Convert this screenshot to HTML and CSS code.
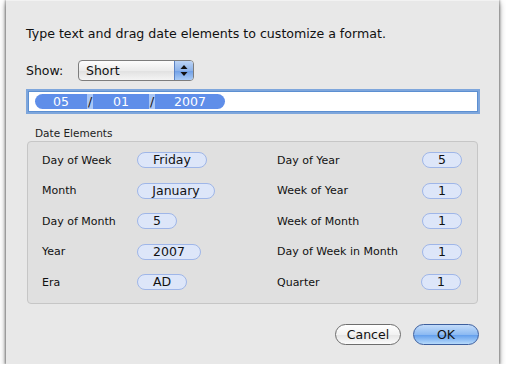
FILE: index.html
```html
<!DOCTYPE html>
<html lang="en">
  <head>
    <meta charset="UTF-8" />
    <title>Date Format</title>
    <link rel="stylesheet" href="styles.css">
  </head>
  <body>
    <!-- sheet window -->
    <div class="sheet">
      <p class="intro">Type text and drag date elements to customize a format.</p>

      <div class="show-row">
        <span class="show-label">Show:</span>
        <div class="popup">
          <span class="popup-text">Short</span>
          <span class="popup-arrows">
            <svg width="8" height="11" viewBox="0 0 8 11">
              <path d="M4 0 L7.5 4 L0.5 4 Z M0.5 7 L7.5 7 L4 11 Z" fill="#111" />
            </svg>
          </span>
        </div>
      </div>

      <!-- token field -->
      <div class="token-field">
        <div class="tokens">
          <span class="token first">05</span>
          <span class="sep">/</span>
          <span class="token">01</span>
          <span class="sep">/</span>
          <span class="token last">2007</span>
        </div>
      </div>

      <!-- date elements box -->
      <div class="group-label">Date Elements</div>
      <div class="group">
        <div class="col col-left">
          <div class="row"><span class="label">Day of Week</span><span class="pill w70">Friday</span></div>
          <div class="row"><span class="label">Month</span><span class="pill w78">January</span></div>
          <div class="row"><span class="label">Day of Month</span><span class="pill w40">5</span></div>
          <div class="row"><span class="label">Year</span><span class="pill w64">2007</span></div>
          <div class="row"><span class="label">Era</span><span class="pill w50">AD</span></div>
        </div>
        <div class="col col-right">
          <div class="row"><span class="label">Day of Year</span><span class="pill w40">5</span></div>
          <div class="row"><span class="label">Week of Year</span><span class="pill w40">1</span></div>
          <div class="row"><span class="label">Week of Month</span><span class="pill w40">1</span></div>
          <div class="row"><span class="label">Day of Week in Month</span><span class="pill w40">1</span></div>
          <div class="row"><span class="label">Quarter</span><span class="pill w40 nudge">1</span></div>
        </div>
      </div>

      <div class="buttons">
        <button class="btn cancel">Cancel</button>
        <button class="btn ok">OK</button>
      </div>
    </div>
  </body>
</html>
```

FILE: styles.css
```css
body {
  margin: 0;
  background-color: #fff;
  font-family: "DejaVu Sans", "Liberation Sans", sans-serif;
  color: #111;
}

.sheet {
  margin-left: 6px;
  width: 493px;
  height: 364px;
  background-color: #e8e8e8;
  border-top: 1px solid #f2f2f2;
  box-shadow: 0 3px 6px rgba(0, 0, 0, 0.5), 1px 0 2px rgba(0, 0, 0, 0.3), -1px 0 2px rgba(0, 0, 0, 0.3);
  padding: 0 0 0 20px;
  box-sizing: border-box;
  display: flex;
  flex-direction: column;
}

.intro {
  margin: 0;
  padding-top: 25px;
  font-size: 12.6px;
  line-height: 16px;
}

.show-row {
  display: flex;
  align-items: center;
  margin-top: 18px;
  font-size: 12.5px;
}

.show-label {
  width: 52px;
}

.popup {
  display: flex;
  width: 116px;
  height: 21px;
  box-sizing: border-box;
  border: 1px solid #7d7d7d;
  border-radius: 4px;
  background: linear-gradient(#fdfdfd, #ececec 50%, #e0e0e0 51%, #f4f4f4);
  overflow: hidden;
}

.popup-text {
  flex: 1;
  padding-left: 7px;
  line-height: 19px;
  font-size: 12.5px;
}

.popup-arrows {
  width: 18px;
  display: flex;
  align-items: center;
  justify-content: center;
  border-left: 1px solid #5b82c4;
  background: linear-gradient(#bcd4f5, #8db3ea 50%, #6e9ee6 51%, #a9cbf6);
}

.token-field {
  margin-top: 8px;
  width: 454px;
  height: 25px;
  box-sizing: border-box;
  border: 2px solid #7ea6dc;
  box-shadow: inset 0 0 0 1px #5c8fd1;
  background-color: #fff;
  padding: 3px 0 0 7px;
}

.tokens {
  display: flex;
  height: 15px;
  font-size: 12.5px;
  line-height: 15px;
}

.token {
  background-color: #5f8ee9;
  color: #fff;
  text-align: center;
}

.token.first {
  width: 52px;
  border-radius: 8px 0 0 8px;
}

.token:not(.first):not(.last) {
  width: 56px;
}

.token.last {
  width: 70px;
  border-radius: 0 8px 8px 0;
}

.sep {
  width: 6px;
  background-color: #a9c6f5;
  color: #111;
  text-align: center;
}

.group-label {
  margin-top: 13px;
  padding-left: 9px;
  font-size: 10.5px;
  line-height: 13px;
  color: #222;
}

.group {
  margin-top: 1px;
  margin-left: 1px;
  width: 451px;
  height: 163px;
  box-sizing: border-box;
  background-color: #e0e0e0;
  border: 1px solid #c6c6c6;
  border-radius: 4px;
  display: flex;
  padding: 3px 15px 0 14px;
  font-size: 11px;
}

.col {
  display: flex;
  flex-direction: column;
}

.col-left {
  width: 235px;
}

.col-right {
  flex: 1;
}

.row {
  display: flex;
  align-items: center;
  height: 30.5px;
}

.col-left .label {
  width: 95px;
}

.col-right .row {
  justify-content: space-between;
}

.pill {
  height: 16px;
  box-sizing: border-box;
  border: 1px solid #9fb6e8;
  border-radius: 8px;
  background-color: #dde6f9;
  font-size: 12.5px;
  line-height: 14px;
  text-align: center;
}

.pill.nudge {
  margin-right: 1px;
}

.w40 { width: 40px; }
.w50 { width: 50px; }
.w64 { width: 64px; }
.w70 { width: 70px; }
.w78 { width: 78px; }

.buttons {
  display: flex;
  justify-content: flex-end;
  gap: 12px;
  margin-top: 20px;
  margin-right: 20px;
}

.btn {
  width: 66px;
  height: 21px;
  border-radius: 11px;
  font-family: inherit;
  font-size: 12.5px;
  padding: 0;
  color: #111;
}

.cancel {
  border: 1px solid #6d6d6d;
  background: linear-gradient(#ffffff, #f2f2f2 50%, #e4e4e4 51%, #fbfbfb);
}

.ok {
  border: 1px solid #3d5f9e;
  background: linear-gradient(#c3dcfa, #8dbaf2 50%, #5f9cec 51%, #b7dafb);
}
```
